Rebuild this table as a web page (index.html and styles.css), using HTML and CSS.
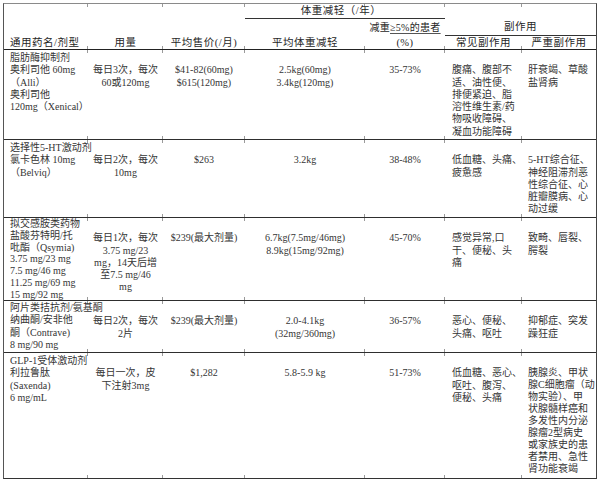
FILE: index.html
```html
<!DOCTYPE html>
<html lang="zh">
<head>
<meta charset="utf-8">
<title>减重药物对比</title>
<link rel="stylesheet" href="styles.css">
</head>
<body>
<div class="sheet">
  <div class="head">
    <div class="h h-name">通用药名/剂型</div>
    <div class="h h-dose">用量</div>
    <div class="h h-price">平均售价(/月)</div>
    <div class="h h-loss-group">体重减轻（/年）</div>
    <div class="h h-loss">平均体重减轻</div>
    <div class="h h-pct-top">减重<span class="ul">≥5%的患者</span></div>
    <div class="h h-pct">(%)</div>
    <div class="h h-side-group">副作用</div>
    <div class="h h-common">常见副作用</div>
    <div class="h h-severe">严重副作用</div>
  </div>

  <div class="row r1">
    <div class="c name">脂肪酶抑制剂<br>奥利司他 60mg<br>（Alli）<br>奥利司他<br>120mg（Xenical）</div>
    <div class="c mid">每日3次，每次<br>60或120mg</div>
    <div class="c mid">$41-82(60mg)<br>$615(120mg)</div>
    <div class="c mid">2.5kg(60mg)<br>3.4kg(120mg)</div>
    <div class="c mid">35-73%</div>
    <div class="c side">腹痛、腹部不<br>适、油性便、<br>排便紧迫、脂<br>溶性维生素/药<br>物吸收障碍、<br>凝血功能障碍</div>
    <div class="c side severe">肝衰竭、草酸<br>盐肾病</div>
  </div>

  <div class="row r2">
    <div class="c name">选择性5-HT激动剂<br>氯卡色林 10mg<br>（Belviq）</div>
    <div class="c mid">每日2次，每次<br>10mg</div>
    <div class="c mid">$263</div>
    <div class="c mid">3.2kg</div>
    <div class="c mid">38-48%</div>
    <div class="c side">低血糖、头痛、<br>疲惫感</div>
    <div class="c side severe">5-HT综合征、<br>神经阻滞剂恶<br>性综合征、心<br>脏瓣膜病、心<br>动过缓</div>
  </div>

  <div class="row r3">
    <div class="c name tight">拟交感胺类药物<br>盐酸芬特明/托<br>吡酯（Qsymia)<br>3.75 mg/23 mg<br>7.5 mg/46 mg<br>11.25 mg/69 mg<br>15 mg/92 mg</div>
    <div class="c mid">每日1次，每次<br>3.75 mg/23<br>mg，14天后增<br>至7.5 mg/46<br>mg</div>
    <div class="c mid">$239(最大剂量)</div>
    <div class="c mid">6.7kg(7.5mg/46mg)<br>8.9kg(15mg/92mg)</div>
    <div class="c mid">45-70%</div>
    <div class="c side">感觉异常,口<br>干、便秘、头<br>痛</div>
    <div class="c side severe">致畸、唇裂、<br>腭裂</div>
  </div>

  <div class="row r4">
    <div class="c name snug">阿片类拮抗剂/氨基酮<br>纳曲酮/安非他<br>酮（Contrave)<br>8 mg/90 mg</div>
    <div class="c mid">每日2次，每次<br>2片</div>
    <div class="c mid">$239(最大剂量)</div>
    <div class="c mid">2.0-4.1kg<br>(32mg/360mg)</div>
    <div class="c mid">36-57%</div>
    <div class="c side">恶心、便秘、<br>头痛、呕吐</div>
    <div class="c side severe">抑郁症、突发<br>躁狂症</div>
  </div>

  <div class="row r5">
    <div class="c name">GLP-1受体激动剂<br>利拉鲁肽<br>(Saxenda)<br>6 mg/mL</div>
    <div class="c mid">每日一次，皮<br>下注射3mg</div>
    <div class="c mid">$1,282</div>
    <div class="c mid">5.8-5.9 kg</div>
    <div class="c mid">51-73%</div>
    <div class="c side">低血糖、恶心、<br>呕吐、腹泻、<br>便秘、头痛</div>
    <div class="c side severe tightish">胰腺炎、甲状<br>腺C细胞瘤（动<br>物实验）、甲<br>状腺髓样癌和<br>多发性内分泌<br>腺瘤2型病史<br>或家族史的患<br>者禁用、急性<br>肾功能衰竭</div>
  </div>
</div>
</body>
</html>
```

FILE: styles.css
```css
* {
  box-sizing: border-box;
}

html, body {
  margin: 0;
  padding: 0;
  background: #fff;
}

body {
  font-family: "Liberation Serif", "Noto Sans CJK SC", serif;
  color: #353535;
  font-size: 10px;
}

.sheet {
  margin: 3px 0 0 3px;
  width: 594px;
  border-top: 1px solid #8a8a8a;
  border-left: 1px solid #555;
  border-right: 1px solid #444;
  border-bottom: 1px solid #333;
}

.head,
.row {
  display: grid;
  grid-template-columns: 84px 75px 82px 120px 80px 77px 74px;
  /* faint column ticks left by the scanned table grid */
  background:
    linear-gradient(#9a9a9a, #9a9a9a) 83px 0 / 1px 3px no-repeat,
    linear-gradient(#9a9a9a, #9a9a9a) 158px 0 / 1px 3px no-repeat,
    linear-gradient(#9a9a9a, #9a9a9a) 240px 0 / 1px 3px no-repeat,
    linear-gradient(#9a9a9a, #9a9a9a) 360px 0 / 1px 3px no-repeat,
    linear-gradient(#9a9a9a, #9a9a9a) 440px 0 / 1px 3px no-repeat,
    linear-gradient(#9a9a9a, #9a9a9a) 517px 0 / 1px 3px no-repeat,
    linear-gradient(#9a9a9a, #9a9a9a) 83px 100% / 1px 3px no-repeat,
    linear-gradient(#9a9a9a, #9a9a9a) 158px 100% / 1px 3px no-repeat,
    linear-gradient(#9a9a9a, #9a9a9a) 240px 100% / 1px 3px no-repeat,
    linear-gradient(#9a9a9a, #9a9a9a) 360px 100% / 1px 3px no-repeat,
    linear-gradient(#9a9a9a, #9a9a9a) 440px 100% / 1px 3px no-repeat,
    linear-gradient(#9a9a9a, #9a9a9a) 517px 100% / 1px 3px no-repeat,
    #fff;
}

.head {
  grid-template-rows: 15px 17px 13px;
  height: 46px;
  border-bottom: 1px solid #222;
}

.h {
  font-size: 10.5px;
  letter-spacing: 0.5px;
  color: #262626;
  text-align: center;
  white-space: nowrap;
}

.h-name {
  grid-column: 1;
  grid-row: 3;
  text-align: left;
  padding-left: 6px;
  line-height: 13px;
}

.h-dose {
  grid-column: 2;
  grid-row: 3;
  line-height: 13px;
}

.h-price {
  grid-column: 3;
  grid-row: 3;
  line-height: 13px;
}

.h-loss-group {
  grid-column: 4 / 6;
  grid-row: 1;
  line-height: 13px;
  border-bottom: 1px solid #333;
  padding-right: 8px;
}

.h-loss {
  grid-column: 4;
  grid-row: 3;
  line-height: 13px;
}

.h-pct-top {
  grid-column: 5;
  grid-row: 2;
  line-height: 17px;
  font-size: 10px;
  letter-spacing: 0.3px;
}

.ul {
  text-decoration: underline;
  text-decoration-color: #555;
  text-underline-offset: 2px;
}

.h-pct {
  grid-column: 5;
  grid-row: 3;
  line-height: 13px;
}

.h-side-group {
  grid-column: 6 / 8;
  grid-row: 2;
  line-height: 16px;
  border-bottom: 1px solid #333;
}

.h-common {
  grid-column: 6;
  grid-row: 3;
  line-height: 13px;
}

.h-severe {
  grid-column: 7;
  grid-row: 3;
  line-height: 13px;
}

.row {
  border-bottom: 1px solid #2e2e2e;
}

.row:last-child {
  border-bottom: none;
}

.r1 { height: 90px; }
.r2 { height: 78px; }
.r3 { height: 83px; }
.r4 { height: 52px; }
.r5 { height: 125px; }

.c {
  line-height: 12.3px;
  white-space: nowrap;
  overflow: visible;
  padding-top: 14.3px;
}

.name {
  padding-top: 2px;
  padding-left: 6px;
}

.name.tight {
  padding-top: 0;
  line-height: 11.8px;
}

.name.snug {
  padding-top: 1px;
}

.mid {
  text-align: center;
}

.side {
  padding-left: 7px;
}

.severe {
  padding-left: 6px;
}

.tightish {
  line-height: 12.1px;
  padding-top: 13.5px;
}
```
